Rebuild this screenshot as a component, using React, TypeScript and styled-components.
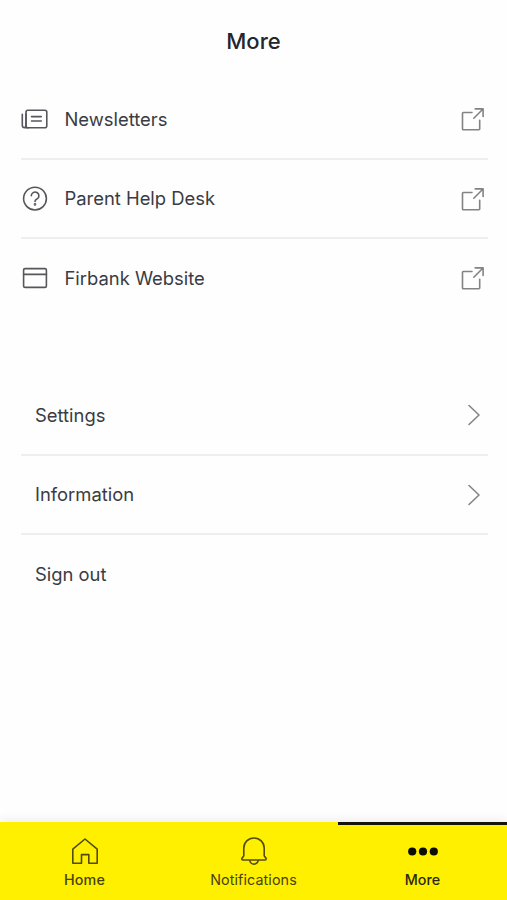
import React from 'react';
import styled, { createGlobalStyle } from 'styled-components';

const GlobalStyle = createGlobalStyle`
  * { box-sizing: border-box; }
  body { margin: 0; background: #fefefe; font-family: Inter, "Liberation Sans", sans-serif; }
`;

const Screen = styled.div`
  height: 900px;
  display: flex;
  flex-direction: column;
  overflow: hidden;
`;

const Title = styled.h1`
  margin: 0;
  height: 79px;
  padding-top: 2px;
  display: flex;
  align-items: center;
  justify-content: center;
  font-size: 22px;
  font-weight: 450;
  color: #24252e;
`;

const List = styled.ul<{ $gap?: number }>`
  list-style: none;
  margin: ${p => p.$gap ?? 0}px 19px 0 21px;
  padding: 0;
`;

const Row = styled.li<{ $inset?: boolean }>`
  height: 79.5px;
  padding: 1px ${p => (p.$inset ? 6 : 2)}px 0 ${p => (p.$inset ? 14 : 0)}px;
  display: flex;
  align-items: center;
  border-bottom: 2px solid #eeeeef;
  &:last-child { border-bottom-color: transparent; }
`;

const Label = styled.span`
  flex: 1;
  font-size: 18.4px;
  line-height: 24px;
  margin-top: -0.6px;
  color: #3a3c43;
`;

const LeadingIcon = styled.span`
  width: 43.5px;
  display: flex;
`;

const Glyph = styled.svg<{ $color?: string }>`
  display: block;
  fill: none;
  stroke: ${p => p.$color ?? '#56575b'};
  stroke-width: 1.6;
  stroke-linecap: round;
  stroke-linejoin: round;
`;

const TabBar = styled.nav`
  margin-top: auto;
  height: 78px;
  display: grid;
  grid-template-columns: repeat(3, 1fr);
  background: #fff000;
  box-shadow: 0 -2px 10px rgba(0, 0, 0, 0.07);
`;

const Tab = styled.a<{ $active?: boolean }>`
  border-top: 3px solid ${p => (p.$active ? '#15150c' : 'transparent')};
  display: flex;
  flex-direction: column;
  align-items: center;
  padding-top: 11px;
`;

const TabLabel = styled.span<{ $strong?: boolean; $active?: boolean }>`
  margin-top: 5px;
  font-size: 14.3px;
  line-height: 18px;
  letter-spacing: 0.1px;
  font-weight: ${p => (p.$strong ? 550 : p.$active ? 450 : 400)};
  color: ${p => (p.$active ? '#29280b' : '#47430a')};
`;

const NewsIcon = () => (
  <Glyph width="28" height="28" viewBox="0 0 28 28">
    <rect x="5" y="5.2" width="20.8" height="17.6" rx="2" />
    <path d="M1.3 9.2v11.1a2.5 2.5 0 0 0 2.5 2.5h3.4M5 9v11.5a2.2 2.2 0 0 1-1.8 2.1M10.5 11.6h9.8M10.5 16h9.8" />
  </Glyph>
);

const HelpIcon = () => (
  <Glyph width="28" height="28" viewBox="0 0 28 28">
    <circle cx="14" cy="13.6" r="11.4" />
    <path d="M10.3 10.8a3.8 3.7 0 1 1 5.8 3.1c-1.3.8-2.1 1.2-2.1 2.5" />
    <circle cx="14" cy="19.4" r=".5" />
  </Glyph>
);

const WindowIcon = () => (
  <Glyph width="28" height="28" viewBox="0 0 28 28">
    <rect x="2.6" y="4.6" width="22.8" height="18.8" rx="1.5" />
    <path d="M2.6 10.4h22.8" />
  </Glyph>
);

const ExternalIcon = () => (
  <Glyph width="26" height="26" viewBox="0 0 26 26" $color="#838385">
    <path d="M12 6.5H3.3a.8.8 0 0 0-.8.8v15.6a.8.8 0 0 0 .8.8h15.6a.8.8 0 0 0 .8-.8v-8.7M13.8 12.2l9.2-9.2M15.2 2.9h7.9v7.6" />
  </Glyph>
);

const ChevronIcon = () => (
  <Glyph width="16" height="24" viewBox="0 0 16 24" $color="#858587">
    <path d="m3 2.5 10 9.5L3 21.5" />
  </Glyph>
);

const HomeIcon = () => (
  <Glyph width="28" height="30" viewBox="0 0 28 30" $color="#514c08">
    <path d="M1.8 13.1 14 3l12.2 10.1v14.2h-8.4v-8.7h-7.3v8.7H1.8z" />
  </Glyph>
);

const BellIcon = () => (
  <Glyph width="28" height="30" viewBox="0 0 28 30" $color="#514c08">
    <path d="M3.8 19.6v-7.7a10.2 9.9 0 0 1 20.4 0v7.7c0 1.2 2 2 2 3.4 0 .7-.4 1-1.1 1H2.9c-.7 0-1.1-.3-1.1-1 0-1.4 2-2.2 2-3.4ZM9.8 24.2a4.2 3.9 0 0 0 8.4 0" />
  </Glyph>
);

const DotsIcon = () => (
  <Glyph width="30" height="30" viewBox="0 0 30 30" $color="none">
    <g fill="#0c0c05">
      <circle cx="4.2" cy="15.5" r="4.1" />
      <circle cx="15" cy="15.5" r="4.1" />
      <circle cx="25.8" cy="15.5" r="4.1" />
    </g>
  </Glyph>
);

const links = [
  { label: 'Newsletters', Icon: NewsIcon },
  { label: 'Parent Help Desk', Icon: HelpIcon },
  { label: 'Firbank Website', Icon: WindowIcon },
];

const options = [
  { label: 'Settings', chevron: true },
  { label: 'Information', chevron: true },
  { label: 'Sign out', chevron: false },
];

export default function App() {
  return (
    <Screen>
      <GlobalStyle />
      <Title>More</Title>
      <List $gap={1}>
        {links.map(({ label, Icon }) => (
          <Row key={label}>
            <LeadingIcon><Icon /></LeadingIcon>
            <Label>{label}</Label>
            <ExternalIcon />
          </Row>
        ))}
      </List>
      <List $gap={57.5}>
        {options.map(({ label, chevron }) => (
          <Row key={label} $inset>
            <Label>{label}</Label>
            {chevron && <ChevronIcon />}
          </Row>
        ))}
      </List>
      <TabBar>
        <Tab><HomeIcon /><TabLabel $strong>Home</TabLabel></Tab>
        <Tab><BellIcon /><TabLabel>Notifications</TabLabel></Tab>
        <Tab $active><DotsIcon /><TabLabel $active>More</TabLabel></Tab>
      </TabBar>
    </Screen>
  );
}
